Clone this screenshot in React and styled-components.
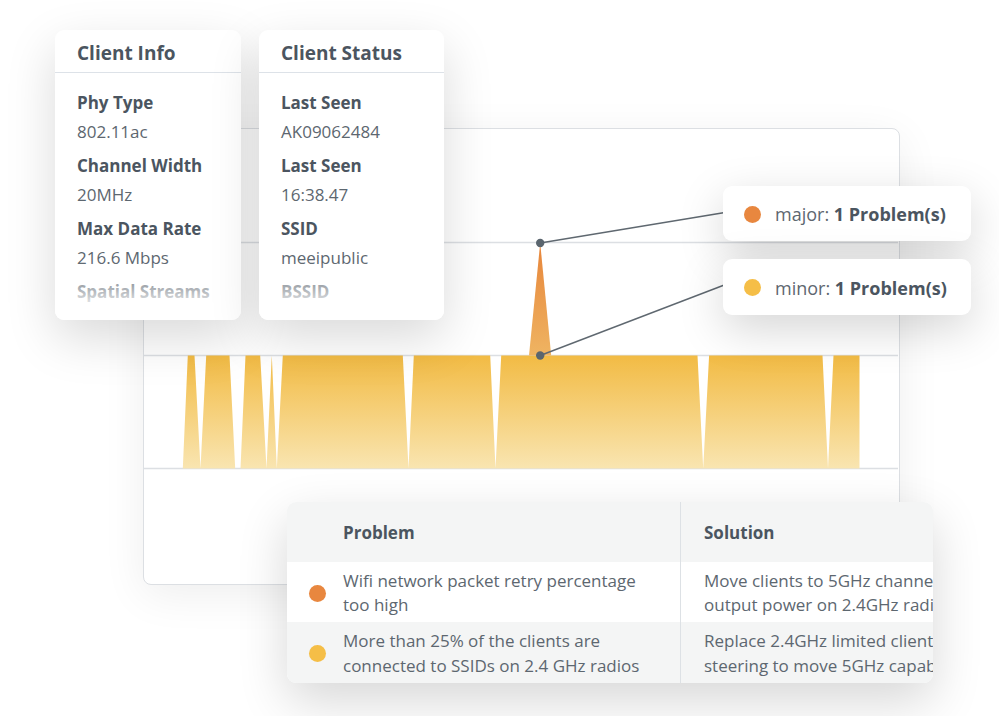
import React from "react";
import styled, { createGlobalStyle } from "styled-components";

const GlobalStyle = createGlobalStyle`
  html, body {
    margin: 0;
    background: #ffffff;
  }
  body {
    font-family: "Open Sans", "Noto Sans", sans-serif;
    color: #4b5560;
  }
`;

const Stage = styled.div`
  position: relative;
  width: 999px;
  height: 716px;
  overflow: hidden;
  box-sizing: border-box;
  padding: 128px 0 0 143px;
`;

const ChartPanel = styled.div`
  width: 757px;
  height: 457px;
  box-sizing: border-box;
  border: 1.5px solid #dcdfe3;
  border-radius: 8px;
  background: #ffffff;
  box-shadow: 0 10px 44px rgba(0, 0, 0, 0.07);
  overflow: hidden;

  svg {
    display: block;
  }
`;

const Card = styled.div`
  position: absolute;
  left: ${({ $left }) => $left}px;
  top: ${({ $top }) => $top}px;
  width: ${({ $width }) => $width}px;
  height: 290px;
  background: #ffffff;
  border-radius: 9px;
  box-shadow: 0 18px 50px rgba(0, 0, 0, 0.15);
  overflow: hidden;

  &::after {
    content: "";
    position: absolute;
    left: 0;
    right: 0;
    bottom: 0;
    height: 58px;
    background: linear-gradient(rgba(255, 255, 255, 0), #ffffff 85%);
  }
`;

const CardHeader = styled.div`
  height: 43px;
  box-sizing: border-box;
  display: flex;
  align-items: center;
  padding: 3px 22px 0;
  border-bottom: 1.5px solid #dde2e8;
  font-size: 19px;
  font-weight: 700;
  color: #4b5560;
`;

const FieldList = styled.div`
  display: flex;
  flex-direction: column;
  gap: 6px;
  padding: 16px 22px 0;
`;

const Field = styled.div`
  display: flex;
  flex-direction: column;
`;

const Label = styled.span`
  font-size: 17px;
  line-height: 28px;
  font-weight: 700;
  color: #4b5560;
  white-space: nowrap;
`;

const Value = styled.span`
  font-size: 17px;
  line-height: 28px;
  padding-top: 1px;
  color: #5d6770;
  white-space: nowrap;
`;

const Legend = styled.div`
  position: absolute;
  left: 723px;
  top: ${({ $top }) => $top}px;
  width: 248px;
  height: ${({ $height }) => $height}px;
  box-sizing: border-box;
  display: flex;
  align-items: center;
  gap: 14px;
  padding: 1px 21px 0;
  background: #ffffff;
  border-radius: 9px;
  box-shadow: 0 14px 46px rgba(0, 0, 0, 0.17);
  font-size: 18px;
  white-space: nowrap;
`;

const Dot = styled.span`
  flex: none;
  width: 17px;
  height: 17px;
  border-radius: 50%;
  background: ${({ $color }) => $color};
`;

const Muted = styled.span`
  color: #5d6770;
`;

const Strong = styled.b`
  font-weight: 700;
  color: #4b5560;
`;

const Table = styled.div`
  position: absolute;
  left: 287px;
  top: 502px;
  width: 646px;
  height: 181px;
  background: #ffffff;
  border-radius: 9px;
  box-shadow: 0 18px 50px rgba(0, 0, 0, 0.16);
  overflow: hidden;
`;

const Row = styled.div`
  display: grid;
  grid-template-columns: 56px 337px 440px;
  height: ${({ $height }) => $height}px;
  background: ${({ $shaded }) => ($shaded ? "#f4f5f5" : "#ffffff")};
`;

const DotCell = styled.div`
  display: flex;
  align-items: center;
  justify-content: center;
  padding: 2px 0 0 4px;
`;

const Cell = styled.div`
  display: flex;
  align-items: center;
  padding: 2px 24px 0 ${({ $divider }) => ($divider ? 23 : 0)}px;
  border-left: ${({ $divider }) => ($divider ? "1.5px solid #dde1e5" : "none")};
  font-size: 17px;
  line-height: 24.5px;
  font-weight: ${({ $head }) => ($head ? 700 : 400)};
  color: ${({ $head }) => ($head ? "#4b5560" : "#5d6770")};
`;

const Nowrap = styled.span`
  white-space: nowrap;
`;

const clientInfo = [
  ["Phy Type", "802.11ac"],
  ["Channel Width", "20MHz"],
  ["Max Data Rate", "216.6 Mbps"],
  ["Spatial Streams", "2"],
];

const clientStatus = [
  ["Last Seen", "AK09062484"],
  ["Last Seen", "16:38.47"],
  ["SSID", "meeipublic"],
  ["BSSID", "00:1a:1e:00:00:00"],
];

const problems = [
  {
    color: "#e8873f",
    problem: "Wifi network packet retry percentage too high",
    solution: ["Move clients to 5GHz channels or reduce", "output power on 2.4GHz radios"],
  },
  {
    color: "#f5be47",
    problem: "More than 25% of the clients are connected to SSIDs on 2.4 GHz radios",
    solution: ["Replace 2.4GHz limited clients or use band", "steering to move 5GHz capable clients"],
    shaded: true,
  },
];

const minorSeries =
  "183.3,469 188.3,356 195,356 201,469 206.7,356 230,356 235.7,469 241,469 246,356 " +
  "260.7,356 267,469 272.3,356 277.3,469 283.3,356 403.3,356 409,469 414.3,356 " +
  "490.7,356 496,469 501.7,356 698,356 703.7,469 709.6,356 823,356 828.5,469 " +
  "834,356 860,356 860,469";

function Chart() {
  return (
    <svg width="754" height="454" viewBox="144.5 129.5 754 454">
      <defs>
        <linearGradient id="minorFill" x1="0" y1="356" x2="0" y2="469" gradientUnits="userSpaceOnUse">
          <stop offset="0" stopColor="#f2bb44" />
          <stop offset="1" stopColor="#f9e5b1" />
        </linearGradient>
        <linearGradient id="majorFill" x1="0" y1="243" x2="0" y2="356" gradientUnits="userSpaceOnUse">
          <stop offset="0" stopColor="#e7853a" />
          <stop offset="1" stopColor="#efb462" />
        </linearGradient>
      </defs>
      {[243, 356, 469].map((y) => (
        <line key={y} x1="140" x2="905" y1={y} y2={y} stroke="#dcdfe3" strokeWidth="1.5" />
      ))}
      <polygon points={minorSeries} fill="url(#minorFill)" />
      <polygon points="529.5,356 540.7,243.5 551.7,356" fill="url(#majorFill)" />
      <line x1="540.7" y1="243.5" x2="730" y2="212.2" stroke="#5f6870" strokeWidth="1.4" />
      <line x1="540.7" y1="356" x2="730" y2="283.5" stroke="#5f6870" strokeWidth="1.4" />
      <circle cx="540.7" cy="243.5" r="4.2" fill="#5a656e" />
      <circle cx="540.7" cy="356" r="4.2" fill="#5a656e" />
    </svg>
  );
}

function InfoCard({ title, fields, left, width }) {
  return (
    <Card $left={left} $top={30} $width={width}>
      <CardHeader>{title}</CardHeader>
      <FieldList>
        {fields.map(([label, value], i) => (
          <Field key={i}>
            <Label>{label}</Label>
            <Value>{value}</Value>
          </Field>
        ))}
      </FieldList>
    </Card>
  );
}

export default function App() {
  return (
    <>
      <GlobalStyle />
      <Stage>
        <ChartPanel>
          <Chart />
        </ChartPanel>

        <InfoCard title="Client Info" fields={clientInfo} left={55} width={186} />
        <InfoCard title="Client Status" fields={clientStatus} left={259} width={185} />

        <Legend $top={186} $height={55}>
          <Dot $color="#e8873f" />
          <span>
            <Muted>major: </Muted>
            <Strong>1 Problem(s)</Strong>
          </span>
        </Legend>
        <Legend $top={259} $height={56}>
          <Dot $color="#f5be47" />
          <span>
            <Muted>minor: </Muted>
            <Strong>1 Problem(s)</Strong>
          </span>
        </Legend>

        <Table>
          <Row $height={60} $shaded>
            <DotCell />
            <Cell $head>Problem</Cell>
            <Cell $head $divider>Solution</Cell>
          </Row>
          {problems.map((p, i) => (
            <Row key={i} $height={i === 0 ? 60 : 61} $shaded={p.shaded}>
              <DotCell>
                <Dot $color={p.color} />
              </DotCell>
              <Cell>{p.problem}</Cell>
              <Cell $divider>
                <span>
                  <Nowrap>{p.solution[0]}</Nowrap>
                  <br />
                  <Nowrap>{p.solution[1]}</Nowrap>
                </span>
              </Cell>
            </Row>
          ))}
        </Table>
      </Stage>
    </>
  );
}
